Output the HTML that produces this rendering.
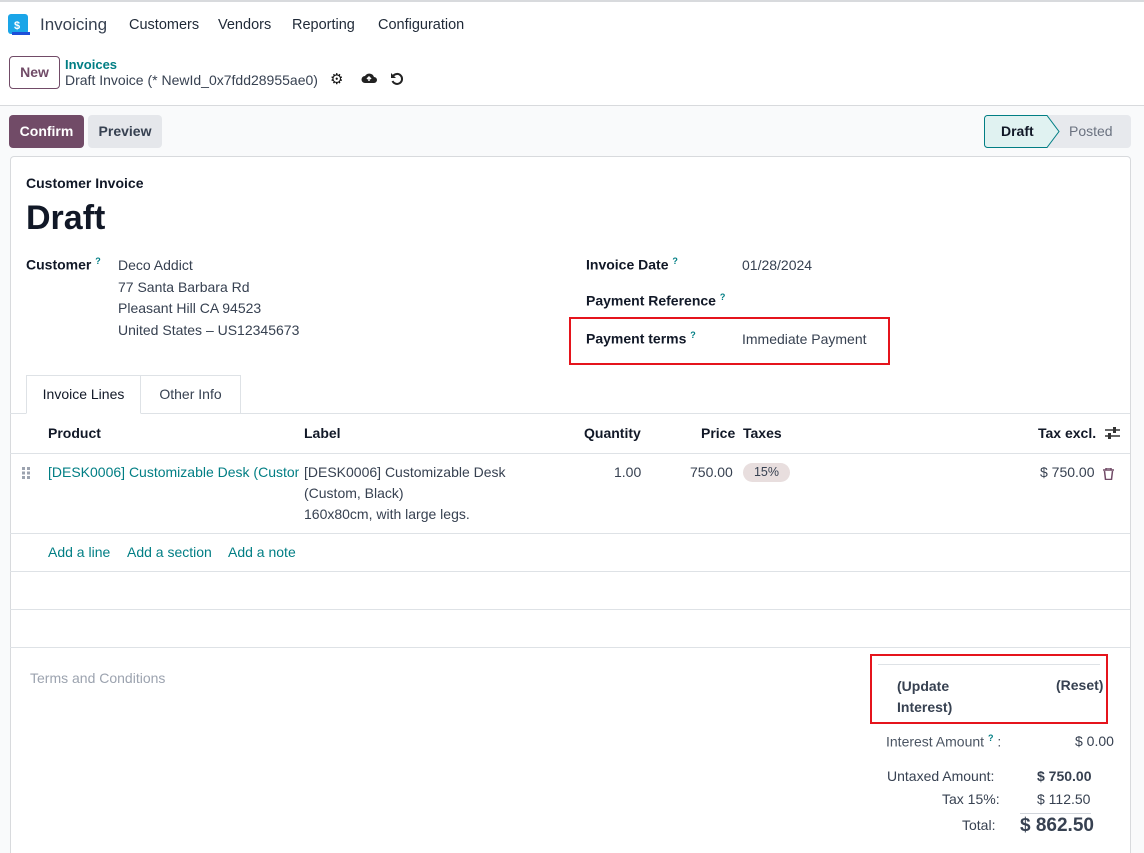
<!DOCTYPE html>
<html><head><meta charset="utf-8"><style>
*{box-sizing:border-box;margin:0;padding:0}
html{width:1144px;height:853px;overflow:hidden}
body{width:1144px;height:853px;overflow:hidden;font-family:"Liberation Sans",sans-serif;font-size:14px;color:#374151;background:#f9fafb;position:relative}
.a{position:absolute;white-space:nowrap}
.teal{color:#017e84}
.b{font-weight:bold;color:#111827}
sup{color:#017e84;font-size:9px;font-weight:bold}
.hl{border-top:1px solid #dee2e6;position:absolute;left:10px;width:1120px}
</style></head><body>
<div class="a" style="left:0;top:0;width:1144px;height:2px;background:#d8dadd"></div>
<div class="a" style="left:0;top:2px;width:1144px;height:104px;background:#fff;border-bottom:1px solid #d8dadd"></div>
<svg class="a" style="left:8px;top:14px" width="22" height="22"><rect x="0" y="0" width="20" height="20" rx="3" fill="#1aa5e8"/><rect x="4" y="18" width="18" height="3" fill="#1d4ed8"/><text x="6" y="15" font-size="11" font-weight="bold" fill="#fff" font-family="Liberation Sans">$</text></svg>
<div class="a" style="left:40px;top:15px;font-size:17px;color:#374151">Invoicing</div>
<div class="a" style="left:129px;top:17px;font-size:14.5px;color:#1f2937">Customers</div>
<div class="a" style="left:218px;top:17px;font-size:14.5px;color:#1f2937">Vendors</div>
<div class="a" style="left:292px;top:17px;font-size:14.5px;color:#1f2937">Reporting</div>
<div class="a" style="left:378px;top:17px;font-size:14.5px;color:#1f2937">Configuration</div>
<div class="a" style="left:9px;top:56px;width:51px;height:33px;border:1px solid #714b67;border-radius:4px;color:#714b67;text-align:center;line-height:31px;font-weight:bold">New</div>
<div class="a teal" style="left:65px;top:57px;font-size:13px;font-weight:bold">Invoices</div>
<div class="a" style="left:65px;top:72px;font-size:14px;color:#374151">Draft Invoice (* NewId_0x7fdd28955ae0)</div>
<div class="a" style="left:330px;top:70px;font-size:15px;color:#111">⚙</div>
<svg class="a" style="left:361px;top:72px" width="16" height="12"><path d="M4 11h9a3 3 0 0 0 0-6 5 5 0 0 0-9-1 3.5 3.5 0 0 0 0 7z" fill="#222"/><path d="M8 9V5M6 7l2-2 2 2" stroke="#fff" stroke-width="1.5" fill="none"/></svg>
<svg class="a" style="left:390px;top:72px" width="14" height="14"><path d="M3 4A5 5 0 1 1 2.5 9" stroke="#222" stroke-width="2" fill="none"/><path d="M1 1v5h5z" fill="#222"/></svg>
<div class="a" style="left:9px;top:115px;width:75px;height:33px;background:#714b67;border-radius:4px;color:#fff;font-weight:bold;text-align:center;line-height:33px">Confirm</div>
<div class="a" style="left:88px;top:115px;width:74px;height:33px;background:#e5e7eb;border-radius:4px;color:#374151;font-weight:bold;text-align:center;line-height:33px">Preview</div>
<div class="a" style="left:984px;top:115px;width:147px;height:33px;background:#e7e9ed;border-radius:4px"></div>
<svg class="a" style="left:984px;top:115px" width="80" height="33"><path d="M3.5 .5H63L75 16.5 63 32.5H3.5a3 3 0 0 1-3-3v-26a3 3 0 0 1 3-3z" fill="#e0f2f1" stroke="#017e84"/></svg>
<div class="a b" style="left:1001px;top:123px">Draft</div>
<div class="a" style="left:1069px;top:123px;color:#6b7280">Posted</div>
<div class="a" style="left:10px;top:156px;width:1121px;height:697px;background:#fff;border:1px solid #d8dadd;border-bottom:none;border-radius:4px 4px 0 0"></div>
<div class="a b" style="left:26px;top:175px;font-size:14px">Customer Invoice</div>
<div class="a b" style="left:26px;top:199px;font-size:34px;font-weight:bold">Draft</div>
<div class="a b" style="left:26px;top:256px">Customer <sup>?</sup></div>
<div class="a" style="left:118px;top:255px;line-height:21.5px">Deco Addict<br>77 Santa Barbara Rd<br>Pleasant Hill CA 94523<br>United States – US12345673</div>
<div class="a b" style="left:586px;top:256px">Invoice Date <sup>?</sup></div>
<div class="a" style="left:742px;top:257px">01/28/2024</div>
<div class="a b" style="left:586px;top:292px">Payment Reference <sup>?</sup></div>
<div class="a" style="left:569px;top:317px;width:321px;height:48px;border:2px solid #e5141c"></div>
<div class="a b" style="left:586px;top:330px">Payment terms <sup>?</sup></div>
<div class="a" style="left:742px;top:331px">Immediate Payment</div>
<div class="hl" style="top:413px"></div>
<div class="a" style="left:26px;top:375px;width:115px;height:39px;background:#fff;border:1px solid #dee2e6;border-bottom-color:#fff;text-align:center;line-height:37px;color:#111827">Invoice Lines</div>
<div class="a" style="left:140px;top:375px;width:101px;height:38px;border:1px solid #dee2e6;border-bottom:none;text-align:center;line-height:37px;color:#374151">Other Info</div>
<div class="a b" style="left:48px;top:425px">Product</div>
<div class="a b" style="left:304px;top:425px">Label</div>
<div class="a b" style="left:584px;top:425px">Quantity</div>
<div class="a b" style="left:701px;top:425px">Price</div>
<div class="a b" style="left:743px;top:425px">Taxes</div>
<div class="a b" style="left:1038px;top:425px">Tax excl.</div>
<svg class="a" style="left:1105px;top:426px" width="15" height="14"><path d="M0 4h15M0 10h15" stroke="#333" stroke-width="1.5"/><rect x="8" y="1" width="3" height="6" fill="#333"/><rect x="3" y="7" width="3" height="6" fill="#333"/></svg>
<div class="hl" style="top:453px"></div>
<svg class="a" style="left:22px;top:467px" width="10" height="12"><g fill="#9ca3af"><rect x="0" y="0" width="3" height="3"/><rect x="5" y="0" width="3" height="3"/><rect x="0" y="4.5" width="3" height="3"/><rect x="5" y="4.5" width="3" height="3"/><rect x="0" y="9" width="3" height="3"/><rect x="5" y="9" width="3" height="3"/></g></svg>
<div class="a teal" style="left:48px;top:464px;width:251px;overflow:hidden">[DESK0006] Customizable Desk (Custom, Black)</div>
<div class="a" style="left:304px;top:462px;line-height:21px;color:#374151">[DESK0006] Customizable Desk<br>(Custom, Black)<br>160x80cm, with large legs.</div>
<div class="a" style="left:614px;top:464px">1.00</div>
<div class="a" style="left:690px;top:464px">750.00</div>
<div class="a" style="left:743px;top:463px;width:47px;height:19px;border-radius:10px;background:#e8dede;text-align:center;line-height:19px;font-size:12.5px">15%</div>
<div class="a" style="left:1040px;top:464px">$ 750.00</div>
<svg class="a" style="left:1103px;top:468px" width="11" height="12"><path d="M0 2h11M3 2V0h5v2M1.5 3l1 8.5h6l1-8.5" stroke="#714b67" stroke-width="1.5" fill="none"/></svg>
<div class="hl" style="top:533px"></div>
<div class="a teal" style="left:48px;top:544px">Add a line</div>
<div class="a teal" style="left:127px;top:544px">Add a section</div>
<div class="a teal" style="left:228px;top:544px">Add a note</div>
<div class="hl" style="top:571px"></div>
<div class="hl" style="top:609px"></div>
<div class="hl" style="top:647px"></div>
<div class="a" style="left:30px;top:670px;color:#9ca3af">Terms and Conditions</div>
<div class="a" style="left:870px;top:654px;width:238px;height:70px;border:2px solid #e5141c"></div>
<div class="a" style="left:878px;top:664px;width:222px;border-top:1px solid #dee2e6"></div>
<div class="a b" style="left:897px;top:676px;color:#374151;line-height:21px">(Update<br>Interest)</div>
<div class="a b" style="left:1056px;top:677px;color:#374151">(Reset)</div>
<div class="a" style="left:886px;top:733px;color:#4b5563">Interest Amount <sup>?</sup> :</div>
<div class="a" style="left:1075px;top:733px">$ 0.00</div>
<div class="a" style="left:887px;top:768px">Untaxed Amount:</div>
<div class="a b" style="left:1037px;top:768px;color:#374151">$ 750.00</div>
<div class="a" style="left:942px;top:791px">Tax 15%:</div>
<div class="a" style="left:1037px;top:791px">$ 112.50</div>
<div class="a" style="left:1020px;top:813px;width:71px;border-top:1px solid #d1d5db"></div>
<div class="a" style="left:962px;top:817px">Total:</div>
<div class="a b" style="left:1020px;top:815px;font-size:19px;color:#374151">$ 862.50</div>
</body></html>
